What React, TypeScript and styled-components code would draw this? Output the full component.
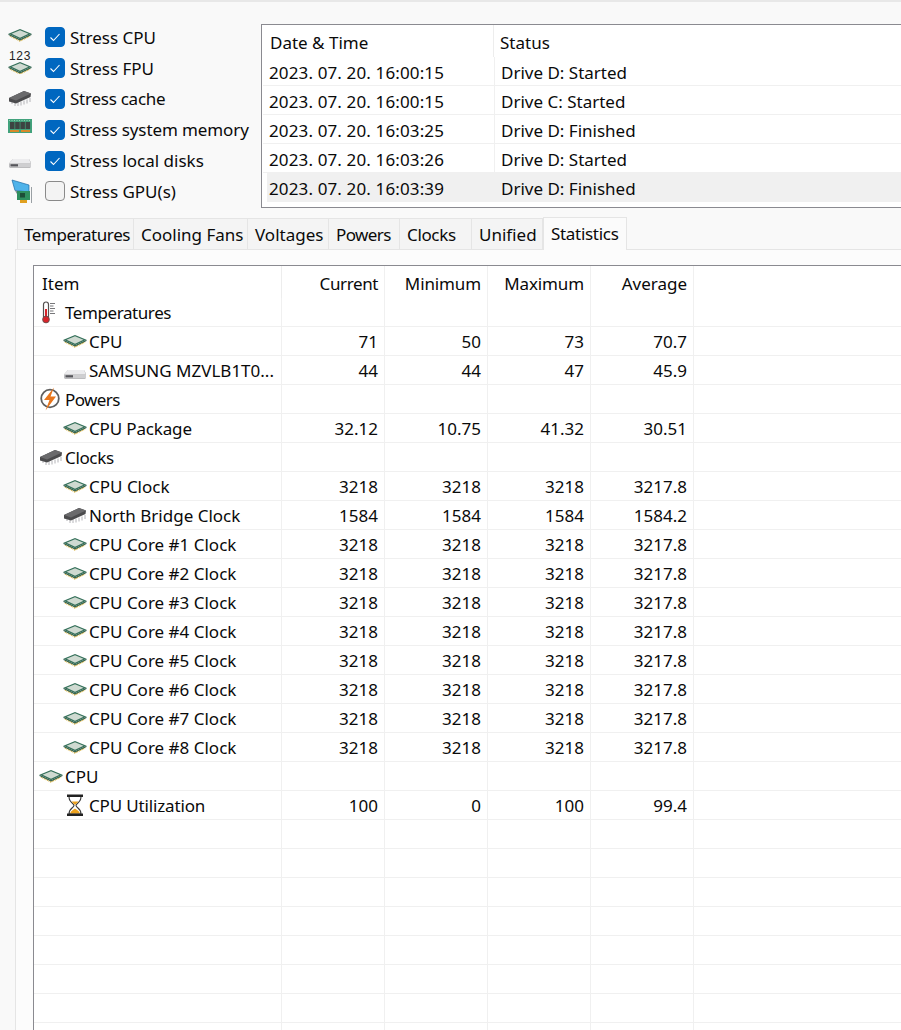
import React from 'react';
import styled, { createGlobalStyle } from 'styled-components';

const GlobalStyle = createGlobalStyle`
  html, body {
    margin: 0;
    padding: 0;
    background: #f9f9f9;
  }
  * {
    box-sizing: border-box;
  }
`;

type IconKind = 'cpu' | 'fpu' | 'chip' | 'ram' | 'disk' | 'gpu' | 'temp' | 'power' | 'hourglass';

function Icon({ kind }: { kind: IconKind }) {
  return (
    <svg width="24" height="24" viewBox="0 0 24 24">
      {kind === 'cpu' && <CpuShape y={6} />}
      {kind === 'fpu' && (
        <>
          <text x="12" y="10" textAnchor="middle" fontSize="12" letterSpacing="0.6" fill="#222" fontFamily="Liberation Sans, sans-serif">
            123
          </text>
          <CpuShape y={12} />
        </>
      )}
      {kind === 'chip' && (
        <>
          <path d="M4 15v3M7 16v4M10 16v4M13 15.5v4M16 14.5v4M19 13.5v4M22 12v4" stroke="#b4b4b8" strokeWidth="1" />
          <path d="M1 12 L16 5 L23 7.5 L22.5 11 L8 17.5 L1 15.5 Z" fill="#4b4b4d" />
          <path d="M1 12 L16 5 L23 7.5 L8 14.5 Z" fill="#6a6a6c" />
        </>
      )}
      {kind === 'ram' && (
        <>
          <rect x="0" y="5" width="24" height="14" fill="#42a27c" />
          <path d="M1 6.5h22" stroke="#8fd0b4" strokeWidth="1" strokeDasharray="1 1.5" />
          <rect x="2" y="8" width="4.5" height="7" fill="#3c4442" />
          <rect x="7.2" y="8" width="4.5" height="7" fill="#3c4442" />
          <rect x="12.4" y="8" width="4.5" height="7" fill="#3c4442" />
          <rect x="17.6" y="8" width="4.5" height="7" fill="#3c4442" />
          <rect x="2" y="16" width="9" height="2" fill="#d88a2c" />
          <rect x="13" y="16" width="9" height="2" fill="#d88a2c" />
        </>
      )}
      {kind === 'disk' && (
        <>
          <path d="M1 12.5 L5 8 H21 L23 11.5 V15.5 L22 17 H2 L1 15.5 Z" fill="#a8a8aa" />
          <path d="M1 12.5 L5 8 H21 L23 12.5 Z" fill="#ececee" />
          <path d="M1.5 12.5 H23 V15.5 L22 16.5 H2 L1.5 15.5 Z" fill="#cfcfd1" />
          <rect x="2.5" y="13.2" width="7.5" height="2.2" fill="#55555a" />
        </>
      )}
      {kind === 'gpu' && (
        <>
          <path d="M4 1 L21 6 V13 L7 11.5 Z" fill="#4fb3ea" stroke="#1d6aa5" strokeWidth="0.7" />
          <path d="M7 11.5 L10 12 V15 L8.5 14.5 Z" fill="#8a8f94" />
          <rect x="9" y="12" width="13" height="9" fill="#2f8f5f" />
          <rect x="12" y="14" width="5" height="4.5" fill="#1d4d38" />
          <rect x="12" y="21" width="7" height="3" fill="#e0a020" />
          <path d="M23.5 8 V24" stroke="#9aa0a4" strokeWidth="1" />
        </>
      )}
      {kind === 'temp' && (
        <>
          <rect x="4.5" y="2" width="5" height="17" rx="2.5" fill="#fff" stroke="#55504f" strokeWidth="1.2" />
          <rect x="6" y="9" width="2" height="9" fill="#d8242a" />
          <circle cx="7" cy="19.5" r="3.4" fill="#d8242a" stroke="#55504f" strokeWidth="0.8" />
          <path d="M11 3.5h5M11 6h3.5M11 8.5h5M11 11h3.5M11 13.5h5" stroke="#77777a" strokeWidth="1" />
        </>
      )}
      {kind === 'power' && (
        <>
          <circle cx="11" cy="11.5" r="8.8" fill="none" stroke="#5f5f5f" strokeWidth="1.8" />
          <path d="M15 0.5 L5 13 H10.5 L6.5 23.5 L17 9.5 H11.5 Z" fill="#e8761c" />
        </>
      )}
      {kind === 'hourglass' && (
        <>
          <path d="M6 3.5 C6 10 11 10 11 12.5 C11 15 6 15 6 21 H18 C18 15 13 15 13 12.5 C13 10 18 10 18 3.5 Z" fill="#fff" stroke="#3a3a3a" strokeWidth="1.1" />
          <path d="M8.5 8.5 H15.5 L12 12 Z" fill="#eda21d" />
          <path d="M7 20.5 C8 17.5 11 16.5 12 15.5 C13 16.5 16 17.5 17 20.5 Z" fill="#eda21d" />
          <rect x="4" y="1.5" width="16" height="2.5" fill="#222" />
          <rect x="4" y="20.5" width="16" height="2.5" fill="#222" />
        </>
      )}
    </svg>
  );
}

function CpuShape({ y }: { y: number }) {
  return (
    <g transform={`translate(0 ${y})`}>
      <path d="M2 7 L12 12 L22 7" fill="none" stroke="#d8b03c" strokeWidth="1.4" strokeDasharray="1 0.7" />
      <path d="M0.5 4.8 L12 10.2 L23.5 4.8 V6 L12 11.5 L0.5 6 Z" fill="#2d5a46" />
      <path d="M0.5 4.8 L12 0 L23.5 4.8 L12 10.2 Z" fill="#35705a" />
      <path d="M3.5 4.8 L12 1.2 L20.5 4.8 L12 8.8 Z" fill="#cfdad1" />
    </g>
  );
}

const Page = styled.div`
  width: 901px;
  height: 1030px;
  overflow: hidden;
  background: #f9f9f9;
  border-top: 2px solid #e8e8e8;
  font-family: 'Noto Sans', 'Open Sans', sans-serif;
  font-size: 17px;
  color: #0a0a0a;
`;

const TopArea = styled.div`
  display: flex;
  height: 215px;
  padding-left: 8px;
`;

const StressList = styled.div`
  flex: none;
  width: 253px;
  padding-top: 20px;
  display: flex;
  flex-direction: column;
`;

const StressRow = styled.label`
  display: flex;
  align-items: center;
  height: 30.8px;
  white-space: nowrap;
`;

const IconSlot = styled.span<{ $shift?: number }>`
  display: block;
  flex: none;
  width: 24px;
  height: 24px;
  transform: translateY(${({ $shift }) => $shift ?? 0}px);
  svg {
    display: block;
  }
`;

const CheckBox = styled.span<{ $checked: boolean }>`
  flex: none;
  display: flex;
  align-items: center;
  justify-content: center;
  width: 20px;
  height: 20px;
  margin: 0 5px 0 13px;
  border-radius: 4px;
  background: ${({ $checked }) => ($checked ? '#0067c0' : '#f3f3f3')};
  border: 1px solid ${({ $checked }) => ($checked ? '#0067c0' : '#8a8a8a')};
`;

const Label = styled.span<{ $tight?: number }>`
  letter-spacing: ${({ $tight }) => $tight ?? 0}px;
`;

const LogBox = styled.div`
  flex: none;
  width: 660px;
  height: 184px;
  margin-top: 22px;
  background: #fff;
  border: 1px solid #8a8a90;
`;

const LogHeader = styled.div`
  display: grid;
  grid-template-columns: 231px 1fr;
  height: 32px;
  align-items: center;
`;

const LogHeadCell = styled.div`
  height: 100%;
  display: flex;
  align-items: center;
  padding: 2px 0 0 8px;
  & + & {
    border-left: 1px solid #ededed;
    padding-left: 6px;
  }
`;

const LogRow = styled.div<{ $selected?: boolean }>`
  display: grid;
  grid-template-columns: ${({ $selected }) => ($selected ? 227 : 231)}px 1fr;
  height: 29px;
  margin-left: ${({ $selected }) => ($selected ? 5 : 1)}px;
  background: ${({ $selected }) => ($selected ? '#f0f0f0' : '#fff')};
  border-bottom: 1px solid #f0f0f0;
`;

const LogCell = styled.div<{ $indent: number }>`
  display: flex;
  align-items: center;
  padding: 2px 0 0 ${({ $indent }) => $indent}px;
  white-space: pre;
  & + & {
    border-left: 1px solid #f0f0f0;
  }
`;

const LogTime = styled(LogCell)`
  letter-spacing: 0.13px;
`;

const TabBar = styled.div`
  display: flex;
  align-items: flex-end;
  height: 30px;
  margin: 2px 0 0 17px;
`;

const Tab = styled.div<{ $width: number; $active?: boolean }>`
  flex: none;
  width: ${({ $width }) => $width}px;
  height: ${({ $active }) => ($active ? 33 : 31)}px;
  display: flex;
  align-items: ${({ $active }) => ($active ? 'flex-start' : 'center')};
  padding: ${({ $active }) => ($active ? '4px 0 0 7px' : '0 0 0 7px')};
  background: ${({ $active }) => ($active ? '#fbfbfb' : '#f4f4f4')};
  border: 1px solid #e5e5e5;
  border-left-width: ${({ $active }) => ($active ? 1 : 0)}px;
  border-bottom-width: 0;
  white-space: nowrap;
  position: relative;
  z-index: ${({ $active }) => ($active ? 1 : 0)};
  margin-bottom: ${({ $active }) => ($active ? -1 : 0)}px;
  &:first-child {
    border-left-width: 1px;
    padding-left: 6px;
  }
`;

const Panel = styled.div`
  margin-left: 15px;
  height: 800px;
  background: #fcfcfc;
  border-top: 1px solid #e5e5e5;
  border-left: 1px solid #e5e5e5;
  padding: 15px 0 0 17px;
`;

const SensorList = styled.div`
  width: 880px;
  background: #fff;
  border-top: 1px solid #8a8a90;
  border-left: 1px solid #8a8a90;
`;

const SensorRow = styled.div<{ $header?: boolean }>`
  display: grid;
  grid-template-columns: 248px repeat(4, 103px) 1fr;
  height: ${({ $header }) => ($header ? 32 : 29)}px;
  border-bottom: ${({ $header }) => ($header ? 0 : 1)}px solid #f0f0f0;
`;

const NameCell = styled.div<{ $child?: boolean }>`
  display: flex;
  align-items: center;
  gap: 2px;
  padding-left: ${({ $child }) => ($child ? 29 : 5)}px;
  border-right: 1px solid #f0f0f0;
  white-space: nowrap;
  overflow: hidden;
`;

const NameText = styled(Label)`
  margin-top: 1px;
`;

const HeadName = styled(NameCell)`
  padding-left: 8px;
  padding-top: 2px;
  border-right-color: #ededed;
`;

const NumCell = styled.div`
  display: flex;
  align-items: center;
  justify-content: flex-end;
  padding: 1px 6px 0 0;
  border-right: 1px solid #f0f0f0;
  white-space: nowrap;
`;

const HeadCell = styled(NumCell)`
  padding-top: 2px;
`;

const BlankCell = styled.div``;

// Noto Sans runs a little wider than the original font on these words
const tightLabels: Record<string, number> = {
  Temperatures: -0.42,
  Powers: -0.6,
  Clocks: -0.35,
  Statistics: -0.3,
  Current: -0.4,
  Minimum: -0.12,
  Maximum: -0.12,
  'Stress cache': -0.25,
  'Stress system memory': -0.1,
  'CPU Package': -0.15,
  'CPU Utilization': -0.15,
};

const stressItems: { label: string; icon: IconKind; checked: boolean; shift: number }[] = [
  { label: 'Stress CPU', icon: 'cpu', checked: true, shift: -2 },
  { label: 'Stress FPU', icon: 'fpu', checked: true, shift: -6 },
  { label: 'Stress cache', icon: 'chip', checked: true, shift: -1 },
  { label: 'Stress system memory', icon: 'ram', checked: true, shift: -4 },
  { label: 'Stress local disks', icon: 'disk', checked: true, shift: 2 },
  { label: 'Stress GPU(s)', icon: 'gpu', checked: false, shift: 0 },
];

const logRows = [
  ['2023. 07. 20. 16:00:15', 'Drive D: Started'],
  ['2023. 07. 20. 16:00:15', 'Drive C: Started'],
  ['2023. 07. 20. 16:03:25', 'Drive D: Finished'],
  ['2023. 07. 20. 16:03:26', 'Drive D: Started'],
  ['2023. 07. 20. 16:03:39', 'Drive D: Finished'],
];

const tabs: { label: string; width: number; active?: boolean }[] = [
  { label: 'Temperatures', width: 117 },
  { label: 'Cooling Fans', width: 114 },
  { label: 'Voltages', width: 81 },
  { label: 'Powers', width: 71 },
  { label: 'Clocks', width: 72 },
  { label: 'Unified', width: 71 },
  { label: 'Statistics', width: 84, active: true },
];

type Sensor = { name: string; icon: IconKind; child?: boolean; shift?: number; values?: string[] };

const coreClock = ['3218', '3218', '3218', '3217.8'];

const sensors: Sensor[] = [
  { name: 'Temperatures', icon: 'temp' },
  { name: 'CPU', icon: 'cpu', child: true, values: ['71', '50', '73', '70.7'] },
  { name: 'SAMSUNG MZVLB1T0...', icon: 'disk', child: true, shift: 4, values: ['44', '44', '47', '45.9'] },
  { name: 'Powers', icon: 'power' },
  { name: 'CPU Package', icon: 'cpu', child: true, values: ['32.12', '10.75', '41.32', '30.51'] },
  { name: 'Clocks', icon: 'chip' },
  { name: 'CPU Clock', icon: 'cpu', child: true, values: coreClock },
  { name: 'North Bridge Clock', icon: 'chip', child: true, values: ['1584', '1584', '1584', '1584.2'] },
  ...[1, 2, 3, 4, 5, 6, 7, 8].map(
    (n): Sensor => ({ name: `CPU Core #${n} Clock`, icon: 'cpu', child: true, values: coreClock }),
  ),
  { name: 'CPU', icon: 'cpu' },
  { name: 'CPU Utilization', icon: 'hourglass', child: true, values: ['100', '0', '100', '99.4'] },
];

const columns = ['Current', 'Minimum', 'Maximum', 'Average'];

export default function App() {
  return (
    <Page>
      <GlobalStyle />
      <TopArea>
        <StressList>
          {stressItems.map((item) => (
            <StressRow key={item.label}>
              <IconSlot $shift={item.shift}>
                <Icon kind={item.icon} />
              </IconSlot>
              <CheckBox $checked={item.checked}>
                {item.checked && (
                  <svg width="12" height="12" viewBox="0 0 12 12">
                    <path d="M1.5 6.5 L4.5 9.5 L10.5 3" fill="none" stroke="#fff" strokeWidth="1.1" />
                  </svg>
                )}
              </CheckBox>
              <Label $tight={tightLabels[item.label]}>{item.label}</Label>
            </StressRow>
          ))}
        </StressList>
        <LogBox>
          <LogHeader>
            <LogHeadCell>Date &amp; Time</LogHeadCell>
            <LogHeadCell>Status</LogHeadCell>
          </LogHeader>
          {logRows.map(([time, status], i) => (
            <LogRow key={i} $selected={i === logRows.length - 1}>
              <LogTime $indent={i === logRows.length - 1 ? 2 : 6}>{time}</LogTime>
              <LogCell $indent={6}>{status}</LogCell>
            </LogRow>
          ))}
        </LogBox>
      </TopArea>
      <TabBar>
        {tabs.map((tab) => (
          <Tab key={tab.label} $width={tab.width} $active={tab.active}>
            <Label $tight={tightLabels[tab.label]}>{tab.label}</Label>
          </Tab>
        ))}
      </TabBar>
      <Panel>
        <SensorList>
          <SensorRow $header>
            <HeadName>Item</HeadName>
            {columns.map((c) => (
              <HeadCell key={c}>
                <Label $tight={tightLabels[c]}>{c}</Label>
              </HeadCell>
            ))}
            <BlankCell />
          </SensorRow>
          {sensors.map((s, i) => (
            <SensorRow key={i}>
              <NameCell $child={s.child}>
                <IconSlot $shift={s.shift}>
                  <Icon kind={s.icon} />
                </IconSlot>
                <NameText $tight={tightLabels[s.name]}>{s.name}</NameText>
              </NameCell>
              {[0, 1, 2, 3].map((c) => (
                <NumCell key={c}>{s.values?.[c]}</NumCell>
              ))}
              <BlankCell />
            </SensorRow>
          ))}
          {Array.from({ length: 8 }, (_, i) => (
            <SensorRow key={i}>
              <NameCell />
              <NumCell />
              <NumCell />
              <NumCell />
              <NumCell />
              <BlankCell />
            </SensorRow>
          ))}
        </SensorList>
      </Panel>
    </Page>
  );
}
